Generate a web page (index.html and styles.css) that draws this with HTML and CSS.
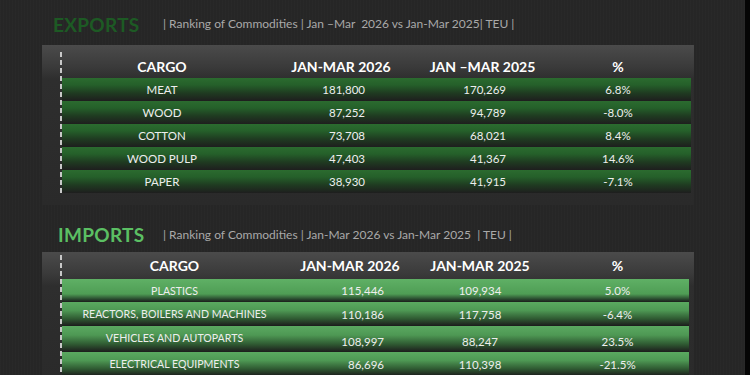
FILE: index.html
```html
<!DOCTYPE html>
<html>
<head>
<meta charset="utf-8">
<link rel="stylesheet" href="styles.css">
</head>
<body>
<div class="page">
  <main class="content">
    <section class="block exports">
      <div class="title-row">
        <h2 class="title">EXPORTS</h2>
        <p class="subtitle">| Ranking of Commodities | Jan –Mar&nbsp; 2026 vs Jan-Mar 2025| TEU |</p>
      </div>
      <div class="panel">
        <div class="table">
          <div class="row head">
            <div class="c1">CARGO</div>
            <div class="c2">JAN-MAR 2026</div>
            <div class="c3">JAN –MAR 2025</div>
            <div class="c4">%</div>
          </div>
          <div class="row data"><div class="c1">MEAT</div><div class="c2 num">181,800</div><div class="c3 num">170,269</div><div class="c4">6.8%</div></div>
          <div class="row data"><div class="c1">WOOD</div><div class="c2 num">87,252</div><div class="c3 num">94,789</div><div class="c4">-8.0%</div></div>
          <div class="row data"><div class="c1">COTTON</div><div class="c2 num">73,708</div><div class="c3 num">68,021</div><div class="c4">8.4%</div></div>
          <div class="row data"><div class="c1">WOOD PULP</div><div class="c2 num">47,403</div><div class="c3 num">41,367</div><div class="c4">14.6%</div></div>
          <div class="row data"><div class="c1">PAPER</div><div class="c2 num">38,930</div><div class="c3 num">41,915</div><div class="c4">-7.1%</div></div>
        </div>
      </div>
    </section>

    <section class="block imports">
      <div class="title-row">
        <h2 class="title">IMPORTS</h2>
        <p class="subtitle">| Ranking of Commodities | Jan-Mar 2026 vs Jan-Mar 2025&nbsp; | TEU |</p>
      </div>
      <div class="panel">
        <div class="table">
          <div class="row head">
            <div class="c1">CARGO</div>
            <div class="c2">JAN-MAR 2026</div>
            <div class="c3">JAN-MAR 2025</div>
            <div class="c4">%</div>
          </div>
          <div class="row data r1"><div class="c1">PLASTICS</div><div class="c2 num">115,446</div><div class="c3">109,934</div><div class="c4">5.0%</div></div>
          <div class="row data r2"><div class="c1">REACTORS, BOILERS AND MACHINES</div><div class="c2 num">110,186</div><div class="c3">117,758</div><div class="c4">-6.4%</div></div>
          <div class="row data r3"><div class="c1">VEHICLES AND AUTOPARTS</div><div class="c2 num">108,997</div><div class="c3">88,247</div><div class="c4">23.5%</div></div>
          <div class="row data r4"><div class="c1">ELECTRICAL EQUIPMENTS</div><div class="c2 num">86,696</div><div class="c3">110,398</div><div class="c4">-21.5%</div></div>
        </div>
      </div>
    </section>
  </main>
  <div class="edge"></div>
</div>
</body>
</html>
```

FILE: styles.css
```css
* { box-sizing: border-box; }

html, body {
  margin: 0;
  padding: 0;
}

body {
  width: 750px;
  height: 375px;
  overflow: hidden;
  background: #262626;
  font-family: Lato, "Open Sans", sans-serif;
  color: #f0f0f0;
}

.page {
  display: flex;
  width: 750px;
  height: 375px;
  background-color: #262626;
  background-image: repeating-linear-gradient(90deg, rgba(255,255,255,0.012) 0 1px, rgba(0,0,0,0) 1px 3px);
}

.content {
  flex: 1;
  padding-left: 42px;
  display: flex;
  flex-direction: column;
}

.edge {
  width: 5px;
  background: #050505;
}

.title-row {
  display: flex;
  align-items: center;
  height: 45px;
  padding-top: 3px;
}

.title {
  margin: 0;
  font-size: 19px;
  font-weight: 700;
  letter-spacing: 0.3px;
  line-height: 1;
}

.subtitle {
  margin: 0;
  font-size: 12px;
  color: #a9a9a9;
  line-height: 1;
}

.exports .title {
  color: #1d5a24;
  margin-left: 11px;
  width: 110px;
}

.imports .title {
  color: #5bbf63;
  margin-left: 16px;
  width: 105px;
}

.imports .title-row {
  height: 47px;
  padding-top: 12px;
}

.panel {
  width: 652px;
  background: linear-gradient(to bottom, #4b4b4b 0, #3a3a3a 22px, #2e2e2e 34px, #2a2a2a 100%);
  padding-left: 18px;
}

.exports .panel {
  height: 160px;
  padding-top: 7px;
  padding-right: 3px;
}

.imports .panel {
  padding-top: 3px;
  padding-right: 5px;
}

.table {
  padding-left: 2px;
  background-image: linear-gradient(to bottom, #c8c8c8 0, #c8c8c8 5px, rgba(0,0,0,0) 5px);
  background-size: 2px 8px;
  background-repeat: repeat-y;
  background-position: left top;
}

.exports .table { height: 143px; }
.imports .table { height: 130px; }

.row {
  display: grid;
  align-items: center;
}

.exports .row { grid-template-columns: 200px 158px 125px 146px; }
.imports .row { grid-template-columns: 223px 128px 132px 143px; padding-left: 1px; }

.row > div { text-align: center; white-space: nowrap; }

.head {
  font-weight: 700;
  font-size: 14px;
  color: #ffffff;
}

.exports .head { height: 26px; align-items: end; padding-bottom: 3px; }
.imports .head { height: 24px; align-items: start; padding-top: 2px; }

.data {
  font-size: 11.5px;
  color: #eeeeee;
  height: 23px;
}

.exports .data {
  background: linear-gradient(to bottom, #2b6b2f 0, #25602a 30%, #1f3b21 65%, #1e1e1e 100%);
}

.imports .data {
  background: linear-gradient(to bottom, #5aa960 0, #4e9854 35%, #2f5a32 70%, #1c1c1c 100%);
}

.imports .c1 { font-size: 10.6px; }
.imports .head .c1 { font-size: 14px; }

.imports .r1 { height: 23px; background: linear-gradient(to bottom, #5fb065 0, #4f9d55 65%, #25402a 90%, #1c1c1c 100%); }
.imports .r2 { height: 24px; }
.imports .r3 { height: 26px; align-items: start; padding-top: 6px; }
.imports .r3 .c2, .imports .r3 .c3, .imports .r3 .c4 { padding-top: 3px; }
.imports .r4 { height: 24px; }

.exports .c2.num { text-align: right; padding-right: 55px; }
.exports .c3.num { text-align: right; padding-right: 39px; }
.imports .c2.num { text-align: right; padding-right: 30px; }
```
